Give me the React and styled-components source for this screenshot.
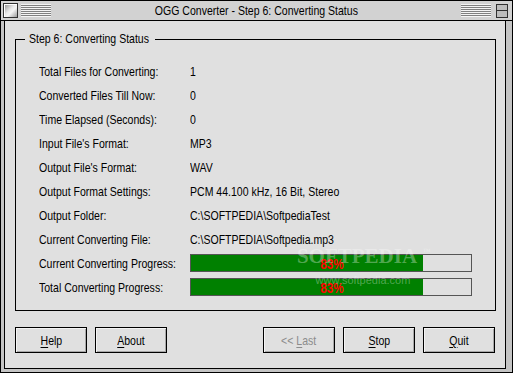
import React from 'react';
import styled, { createGlobalStyle } from 'styled-components';

const GlobalStyle = createGlobalStyle`
  html, body {
    margin: 0;
    padding: 0;
    background: #c0c0c0;
  }
  body {
    font-family: "Liberation Sans", Arial, sans-serif;
    font-size: 13px;
    color: #000;
  }
`;

// the original uses a narrow system font, so the text is squeezed horizontally
const Narrow = styled.span`
  display: inline-block;
  white-space: nowrap;
  transform: scaleX(0.81);
  transform-origin: ${(p) => (p.$center ? 'center' : 'left')} center;
`;

const Window = styled.div`
  width: 513px;
  height: 373px;
  box-sizing: border-box;
  border: 1px solid #000;
  background: #c4c4c4;
  display: flex;
  flex-direction: column;
`;

const TitleBar = styled.div`
  height: 20px;
  box-sizing: border-box;
  border-bottom: 1px solid #000;
  background: #d2d2d2;
  display: flex;
  align-items: center;
  padding: 0 4px 0 2px;
  gap: 3px;
`;

const SysBox = styled.div`
  width: 15px;
  height: 15px;
  box-sizing: border-box;
  border: 1px solid #303030;
  background: linear-gradient(135deg, #8a8a8a 0%, #e8e8e8 45%, #f4f4f4 60%, #9a9a9a 100%);
  box-shadow: inset 1px 1px #fff;
`;

const Stripes = styled.div`
  width: 30px;
  height: 13px;
  background: repeating-linear-gradient(
    to bottom,
    #f4f4f4 0px,
    #f4f4f4 1px,
    #808080 1px,
    #808080 2px
  );
`;

const Title = styled.div`
  flex: 1;
  text-align: center;
  font-size: 13px;
`;

const MaxBox = styled.div`
  width: 12px;
  height: 14px;
  box-sizing: border-box;
  border: 1px solid #303030;
  background: linear-gradient(to bottom, #bdbdbd 0 5px, #303030 5px 6px, #bdbdbd 6px);
  margin-left: 2px;
`;

const Body = styled.div`
  flex: 1;
  margin: 0 6px 3px 3px;
  border: 1px solid #000;
  border-top: none;
  background: #e0e0e0;
  display: flex;
  flex-direction: column;
  padding: 18px 9px 0 10px;
  position: relative;
`;

const Group = styled.div`
  position: relative;
  border: 1px solid #000;
  height: 272px;
  box-sizing: border-box;
  padding: 19px 0 0 23px;
  display: grid;
  grid-template-columns: 151px 1fr;
  grid-auto-rows: 24px;
  align-items: center;
`;

const Legend = styled.div`
  position: absolute;
  top: -9px;
  left: 9px;
  width: 122px;
  padding: 0 4px;
  background: #e0e0e0;
  line-height: 16px;
`;

const Cell = styled.div`
  white-space: nowrap;
`;

const Bar = styled.div`
  width: 282px;
  height: 18px;
  box-sizing: border-box;
  border: 1px solid #555;
  background: #e0e0e0;
  position: relative;
  display: flex;
  align-items: center;
  justify-content: center;
`;

const Fill = styled.div`
  position: absolute;
  left: 0;
  top: 0;
  bottom: 0;
  background: #008000;
`;

const Percent = styled.span`
  position: relative;
  display: inline-block;
  color: #ff0000;
  font-weight: bold;
  font-size: 15px;
  transform: scaleX(0.78);
  margin-left: 2px;
`;

const Buttons = styled.div`
  display: flex;
  justify-content: space-between;
  margin-top: 16px;
  padding-right: 1px;
`;

const ButtonGroup = styled.div`
  display: flex;
  gap: 8px;
`;

const Button = styled.button`
  width: 72px;
  height: 26px;
  box-sizing: border-box;
  border: 1px solid #000;
  background: #e0e0e0;
  box-shadow: inset 1px 1px #f4f4f4, inset -1px -1px #a8a8a8;
  font: inherit;
  color: ${(p) => (p.disabled ? '#8c8c8c' : '#000')};
  padding: 0;
  display: flex;
  align-items: center;
  justify-content: center;

  u {
    text-decoration-thickness: 1px;
    text-underline-offset: 2px;
  }
`;

const Watermark = styled.div`
  position: absolute;
  left: 288px;
  top: 224px;
  pointer-events: none;
  color: rgba(255, 255, 255, 0.32);
  font-family: "Liberation Serif", serif;
  text-align: center;
  width: 128px;
`;

const WmBig = styled.div`
  font-size: 21px;
  font-weight: bold;
  line-height: 22px;
  position: relative;

  sup {
    position: absolute;
    right: -10px;
    top: -4px;
    font-size: 8px;
  }
`;

const WmSmall = styled.div`
  font-family: "Liberation Sans", Arial, sans-serif;
  font-size: 11px;
  margin-top: 7px;
  margin-left: 12px;
`;

const rows = [
  ['Total Files for Converting:', '1'],
  ['Converted Files Till Now:', '0'],
  ['Time Elapsed (Seconds):', '0'],
  ["Input File's Format:", 'MP3'],
  ["Output File's Format:", 'WAV'],
  ['Output Format Settings:', 'PCM 44.100 kHz, 16 Bit, Stereo'],
  ['Output Folder:', 'C:\\SOFTPEDIA\\SoftpediaTest'],
  ['Current Converting File:', 'C:\\SOFTPEDIA\\Softpedia.mp3'],
];

const progress = [
  ['Current Converting Progress:', 83],
  ['Total Converting Progress:', 83],
];

const App = () => {
  return (
    <>
      <GlobalStyle />
      <Window>
        <TitleBar>
          <SysBox />
          <Stripes />
          <Title><Narrow $center>OGG Converter - Step 6: Converting Status</Narrow></Title>
          <Stripes />
          <MaxBox />
        </TitleBar>
        <Body>
          <Group>
            <Legend><Narrow>Step 6: Converting Status</Narrow></Legend>
            {rows.map(([label, value]) => (
              <React.Fragment key={label}>
                <Cell><Narrow>{label}</Narrow></Cell>
                <Cell><Narrow>{value}</Narrow></Cell>
              </React.Fragment>
            ))}
            {progress.map(([label, pct]) => (
              <React.Fragment key={label}>
                <Cell><Narrow>{label}</Narrow></Cell>
                <Bar>
                  <Fill style={{ width: `${pct}%` }} />
                  <Percent>{pct}%</Percent>
                </Bar>
              </React.Fragment>
            ))}
          </Group>
          <Buttons>
            <ButtonGroup>
              <Button><Narrow $center><u>H</u>elp</Narrow></Button>
              <Button><Narrow $center><u>A</u>bout</Narrow></Button>
            </ButtonGroup>
            <ButtonGroup>
              <Button disabled><Narrow $center>&lt;&lt; <u>L</u>ast</Narrow></Button>
              <Button><Narrow $center><u>S</u>top</Narrow></Button>
              <Button><Narrow $center><u>Q</u>uit</Narrow></Button>
            </ButtonGroup>
          </Buttons>
          <Watermark>
            <WmBig>SOFTPEDIA<sup>™</sup></WmBig>
            <WmSmall>www.softpedia.com</WmSmall>
          </Watermark>
        </Body>
      </Window>
    </>
  );
};

export default App;
